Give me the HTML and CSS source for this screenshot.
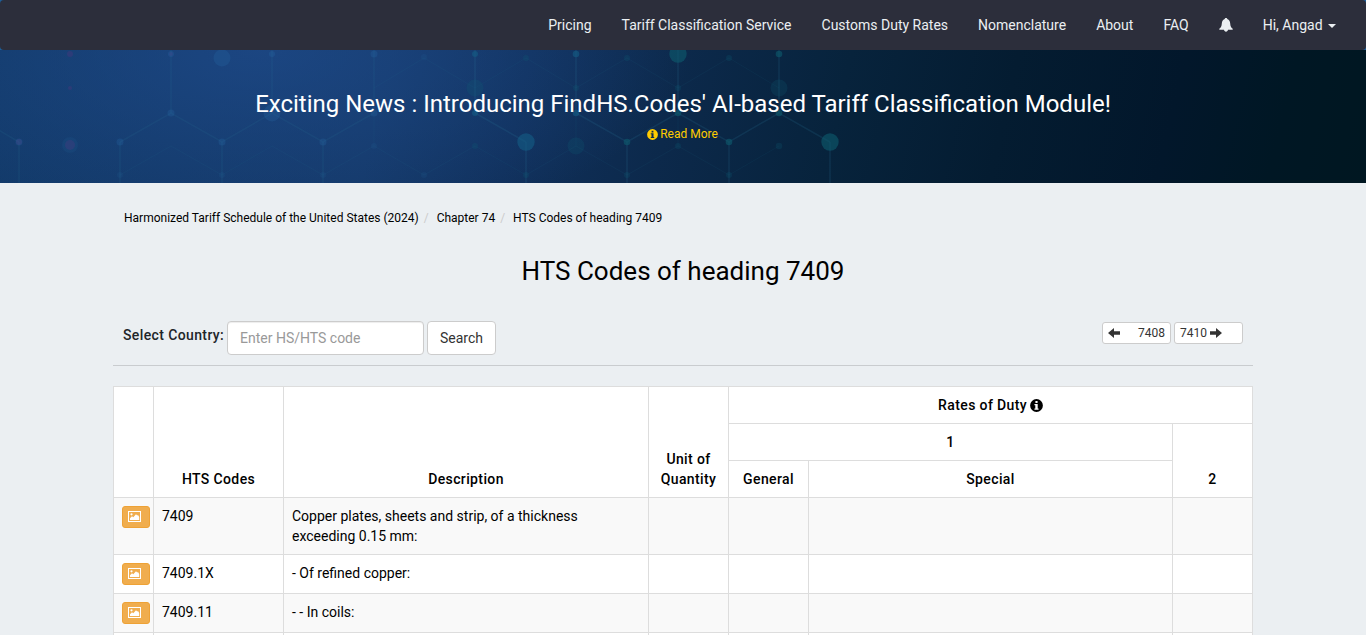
FILE: index.html
```html
<!DOCTYPE html>
<html lang="en">
<head>
<meta charset="utf-8">
<title>HTS Codes of heading 7409</title>
<link rel="stylesheet" href="styles.css">
</head>
<body>
<svg class="sprite" aria-hidden="true">
  <symbol id="info" viewBox="0 0 12 12"><path fill-rule="evenodd" d="M6 .1a5.900 5.900 0 1 1 0 11.800A5.900 5.900 0 0 1 6 .1zM5 1.900v1.800h2V1.900zM4.100 4.700v1h.8v3h-.8v1.200h3.800V8.700h-.8v-4z"/></symbol>
  <symbol id="picture" viewBox="0 0 13 11"><path fill-rule="evenodd" d="M0 0h13v11H0zM1 1v9h11V1z"/><path d="M2 9V7.300l2-2 1.300 1L8 3.200l1.200 1.300.8-.5 1.200 2V9z"/><circle cx="3.500" cy="3.300" r="1.100"/></symbol>
</svg>
<div class="top">
  <nav class="navbar">
    <a>Pricing</a>
    <a>Tariff Classification Service</a>
    <a>Customs Duty Rates</a>
    <a>Nomenclature</a>
    <a>About</a>
    <a>FAQ</a>
    <a class="bell"><svg viewBox="0 0 14 14"><path d="M7 0c.8 0 1.300.4 1.300 1.100C10.300 1.700 11 3.400 11.200 5.500c.2 2.600.6 3.900 2.500 5.300v1H9c-.1 1.100-.9 1.900-2 1.900s-1.900-.8-2-1.900H.3v-1c1.900-1.400 2.300-2.700 2.500-5.300C3 3.400 3.700 1.700 5.700 1.100 5.700.4 6.200 0 7 0z"/></svg></a>
    <a>Hi, Angad <span class="caret"></span></a>
  </nav>
</div>
<header class="banner">
  <svg class="network" viewBox="0 50 1366 133" preserveAspectRatio="none" aria-hidden="true">
    <g class="links left">
      <path d="M171 50V113M272 50V113M374 50V113M19 142V183M120 142V183M222 142V183M323 142V183"/>
      <path d="M-31 113L19 142M120 142L171 113L222 142L272 113L323 142L374 113"/>
    </g>
    <g class="links">
      <path d="M475 50V113M576 50V113M678 50V113M779 50V113M526 142V183M627 142V183M729 142V183M830 142V183"/>
      <path d="M475 113L526 142M576 113L627 142L678 113L729 142L779 113L830 142"/>
    </g>
    <g class="faint-links">
      <path d="M374 88L424 58L475 88L526 58L576 88L627 58L678 88L729 58L779 88"/>
      <path d="M120 175L171 146L222 175L272 146L323 175L374 146L424 175L475 146L526 175L576 146L627 175L678 146L729 175L779 146"/>
      <path d="M374 113V146M576 113V146M678 113V146"/>
    </g>
    <g class="violet-nodes">
      <circle cx="70" cy="54" r="3"/><circle cx="70" cy="88" r="2"/><circle cx="70" cy="145" r="5"/><circle cx="19" cy="142" r="3"/><circle cx="171" cy="54" r="2"/>
    </g>
    <g class="blue-nodes">
      <circle cx="222" cy="58" r="8.500"/><circle cx="272" cy="113" r="8.500"/><circle cx="19" cy="142" r="3.500"/>
      <circle cx="171" cy="54" r="3"/><circle cx="171" cy="113" r="3.500"/><circle cx="120" cy="142" r="3.500"/><circle cx="222" cy="142" r="3.500"/>
      <circle cx="272" cy="54" r="3"/><circle cx="323" cy="142" r="3.500"/><circle cx="374" cy="54" r="3.500"/><circle cx="374" cy="113" r="3.500"/>
    </g>
    <g class="dim-blue-nodes">
      <circle cx="70" cy="145" r="8"/><circle cx="120" cy="175" r="3"/><circle cx="222" cy="175" r="3"/><circle cx="323" cy="175" r="3"/><circle cx="374" cy="146" r="3"/><circle cx="424" cy="57" r="3"/><circle cx="424" cy="175" r="3"/>
    </g>
    <g class="teal-nodes">
      <circle cx="526" cy="142" r="8.700" class="bluish"/><circle cx="678" cy="54" r="8.700"/><circle cx="830" cy="142" r="8.700"/>
      <circle cx="475" cy="54" r="3" class="bluish"/><circle cx="576" cy="54" r="3.300" class="bluish"/><circle cx="779" cy="54" r="3.300"/><circle cx="475" cy="113" r="3" class="bluish"/><circle cx="576" cy="113" r="3.300" class="bluish"/><circle cx="678" cy="113" r="3.300"/><circle cx="779" cy="113" r="3.300"/><circle cx="627" cy="142" r="3.300"/><circle cx="729" cy="142" r="3.300"/>
    </g>
    <g class="faint-nodes">
      <circle cx="475" cy="88" r="8.500"/><circle cx="576" cy="146" r="8.500"/><circle cx="779" cy="88" r="8.500"/>
      <circle cx="526" cy="58" r="3"/><circle cx="627" cy="58" r="3"/><circle cx="729" cy="58" r="3"/><circle cx="576" cy="88" r="3"/><circle cx="678" cy="88" r="3"/><circle cx="475" cy="146" r="3"/><circle cx="678" cy="146" r="3"/><circle cx="779" cy="146" r="3.300"/><circle cx="526" cy="175" r="3"/><circle cx="627" cy="175" r="3"/><circle cx="729" cy="175" r="3"/>
    </g>
  </svg>
  <h2>Exciting News : Introducing FindHS.Codes' AI-based Tariff Classification Module!</h2>
  <a class="more"><svg><use href="#info"/></svg>Read More</a>
</header>
<main class="container">
  <ol class="breadcrumb">
    <li>Harmonized Tariff Schedule of the United States (2024)</li>
    <li>Chapter 74</li>
    <li>HTS Codes of heading 7409</li>
  </ol>
  <h1>HTS Codes of heading 7409</h1>
  <div class="toolbar">
    <form class="search">
      <label for="code">Select Country:</label>
      <input id="code" type="text" placeholder="Enter HS/HTS code">
      <button type="button">Search</button>
    </form>
    <div class="pager">
      <a class="prev"><svg viewBox="0 0 12 10"><path d="M0 5L6 0v3.300h6v3.400H6V10z"/></svg><span>7408</span></a>
      <a class="next"><span>7410</span><svg viewBox="0 0 12 10"><path d="M12 5L6 0v3.300H0v3.400h6V10z"/></svg></a>
    </div>
  </div>
  <table class="tariff">
    <colgroup><col class="c-pic"><col class="c-code"><col class="c-desc"><col class="c-rate"><col class="c-rate"><col class="c-special"><col class="c-rate"></colgroup>
    <thead>
      <tr><th rowspan="3"></th><th rowspan="3">HTS Codes</th><th rowspan="3">Description</th><th rowspan="3">Unit of Quantity</th><th colspan="3">Rates of Duty <svg><use href="#info"/></svg></th></tr>
      <tr><th colspan="2">1</th><th rowspan="2">2</th></tr>
      <tr><th>General</th><th>Special</th></tr>
    </thead>
    <tbody>
      <tr><td><a class="pic"><svg><use href="#picture"/></svg></a></td><td>7409</td><td>Copper plates, sheets and strip, of a thickness exceeding 0.15 mm:</td><td></td><td></td><td></td><td></td></tr>
      <tr><td><a class="pic"><svg><use href="#picture"/></svg></a></td><td>7409.1X</td><td>- Of refined copper:</td><td></td><td></td><td></td><td></td></tr>
      <tr><td><a class="pic"><svg><use href="#picture"/></svg></a></td><td>7409.11</td><td>- - In coils:</td><td></td><td></td><td></td><td></td></tr>
      <tr><td></td><td></td><td></td><td></td><td></td><td></td><td></td></tr>
    </tbody>
  </table>
</main>
</body>
</html>
```
FILE: styles.css
```css
* { box-sizing: border-box; }
html, body { height: 635px; overflow: hidden; }
body { margin: 0; background: #ebeff2; color: #000; font: 14px/20px Roboto, sans-serif; }
.sprite { display: none; }
svg { fill: currentColor; }

.top { background: #1d5f9a; }
.navbar { display: flex; justify-content: flex-end; height: 50px; padding-right: 15px; border-radius: 4px; background: #2c2e3b; color: #ebeff2; }
.navbar a { padding: 15px; white-space: nowrap; }
.bell svg { display: block; width: 14px; height: 14px; margin-top: 3px; }
.caret { display: inline-block; margin-left: 2px; vertical-align: middle; border-top: 4px solid; border-right: 4px solid transparent; border-left: 4px solid transparent; }

.banner { position: relative; height: 133px; padding-top: 41px; text-align: center; color: #fff; background: radial-gradient(ellipse 430px 190px at 260px 0, rgba(30, 74, 138, .75), rgba(30, 74, 138, 0)), linear-gradient(103deg, #123a69 0%, #143867 28%, #10305b 38%, #0c294b 49%, #07233c 61%, #041c31 73%, #02172b 85%, #001724 93%, #001721 100%); }
.network { position: absolute; top: 0; left: 0; width: 100%; height: 100%; }
.links { fill: none; stroke: #2b7a9c; stroke-opacity: .18; stroke-width: 1.500; }
.links.left { stroke-opacity: .13; }
.faint-links { fill: none; stroke: #2b7a9c; stroke-opacity: .08; }
.violet-nodes { fill: #6c3180; fill-opacity: .25; }
.blue-nodes { fill: #2669a6; fill-opacity: .28; }
.dim-blue-nodes { fill: #2669a6; fill-opacity: .13; }
.teal-nodes { fill: #0d5b6e; fill-opacity: .6; }
.teal-nodes .bluish { fill: #145d85; }
.faint-nodes { fill: #0f6076; fill-opacity: .22; }
.banner h2 { position: relative; margin: 0; font-size: 24px; font-weight: 400; line-height: 27px; }
.more { position: relative; display: flex; justify-content: center; align-items: center; gap: 2px; margin-top: 6px; padding-right: 1px; color: #ffcc00; font-size: 12px; }
.more svg { width: 11px; height: 11px; }

.container { width: 1140px; margin: 0 auto; }
.breadcrumb { display: flex; margin: 0; padding: 25px 11px 0; list-style: none; font-size: 12px; }
.breadcrumb li + li::before { content: "/"; padding: 0 8px 0 5px; color: #ccc; }
h1 { margin: 28px 0 0; font-size: 26px; font-weight: 400; line-height: 30px; text-align: center; }
.toolbar { display: flex; justify-content: space-between; align-items: flex-start; height: 80px; margin-bottom: 20px; padding: 35px 10px 0; border-bottom: 1px solid #c9cccf; }
.search { display: flex; gap: 3px; }
.search label { width: 101px; padding-top: 4px; color: #212529; font-weight: 500; letter-spacing: .38px; white-space: nowrap; }
.search input, .search button { height: 34px; border: 1px solid #ccc; border-radius: 4px; background: #fff; color: #333; font: inherit; padding: 6px 12px; }
.search input { width: 197px; box-shadow: inset 0 1px 1px rgba(0, 0, 0, .075); }
.search input::placeholder { color: #999; }
.pager { display: flex; gap: 3px; padding-top: 1px; }
.pager a { display: flex; align-items: center; width: 69px; height: 22px; padding: 0 5px; border: 1px solid #ccc; border-radius: 3px; background: #fff; color: #333; font-size: 12px; }
.pager svg { width: 12px; height: 10px; }
.prev { justify-content: space-between; }
.next { gap: 3px; }

.tariff { width: 1140px; table-layout: fixed; border-collapse: collapse; background: #fff; }
.c-pic { width: 40px; }
.c-code { width: 130px; }
.c-desc { width: 365px; }
.c-rate { width: 80px; }
.c-special { width: 364px; }
.tariff th, .tariff td { height: 37px; padding: 8px; border: 1px solid #ddd; }
.tariff th { padding: 8px 7px; font-weight: 500; letter-spacing: .38px; vertical-align: bottom; text-align: center; }
.tariff th svg { width: 13px; height: 13px; margin-left: -1px; vertical-align: -2px; }
.tariff td { vertical-align: top; }
.tariff tbody tr { height: 39px; }
.tariff tbody tr:nth-child(odd) { background: #f9f9f9; }
.pic { display: flex; width: 28px; height: 22px; padding: 4px 5px; border: 1px solid #eea236; border-radius: 3px; background: #f0ad4e; color: #fff; }
.pic svg { width: 13px; height: 11px; }
```
